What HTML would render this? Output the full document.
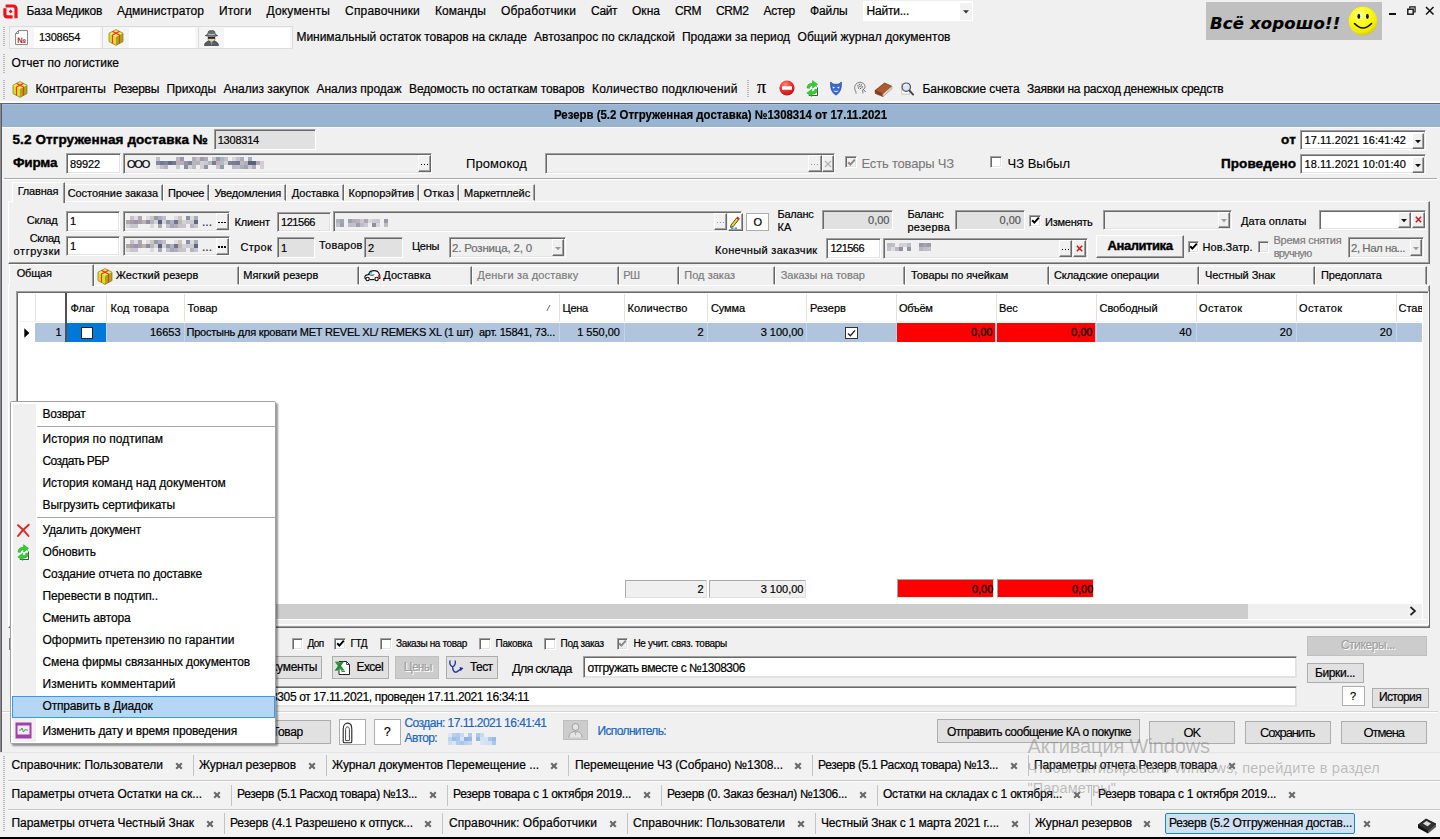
<!DOCTYPE html><html lang="ru"><head><meta charset="utf-8"><title>База Медиков</title><style>
*{box-sizing:border-box;margin:0;padding:0}
html,body{width:1440px;height:839px;overflow:hidden;background:#f0f0f0}
body{position:relative;font-family:"Liberation Sans",sans-serif;font-size:11px;color:#000;line-height:16px}
.t{position:absolute;white-space:nowrap;display:block;-webkit-text-stroke:0.2px}
.b{position:absolute;display:block}
svg{position:absolute;display:block;overflow:visible}
.sk{border:1px solid;border-color:#a0a0a0 #fff #fff #a0a0a0;box-shadow:inset 1px 1px 0 #696969,inset -1px -1px 0 #e3e3e3;background:#fff}
.skg{background:#e1e1e1}
.skf{background:#f0f0f0}
.btn{background:#e1e1e1;border:1px solid #adadad}
.btnw{background:#fff;border:1px solid #adadad}
.btnd{background:#ccc;border:1px solid #bfbfbf}
.cb{border:1px solid;border-color:#a0a0a0 #fff #fff #a0a0a0;box-shadow:inset 1px 1px 0 #696969,inset -1px -1px 0 #e3e3e3;background:#fff}
.cbd{background:#f0f0f0}
.sb{background:#f0f0f0;border:1px solid;border-color:#fff #696969 #696969 #fff;box-shadow:inset -1px -1px 0 #a0a0a0}
.tab{border:1px solid;border-color:#fff #696969 transparent #fff;box-shadow:inset -1px 0 0 #a0a0a0;background:#f0f0f0}
.grip{background-image:repeating-linear-gradient(to bottom,#b8b8b8 0,#b8b8b8 1px,transparent 1px,transparent 2px);}
</style></head><body>
<svg style="left:3px;top:3.5px" width="15" height="15" viewBox="0 0 15 15"><path d="M2.6 2H10Q13 2 13 5V14.2" fill="none" stroke="#f01018" stroke-width="3.2"/><path d="M1.9 4.2V10.5Q1.9 12.9 4.4 12.9H9.6" fill="none" stroke="#f01018" stroke-width="3.2"/><path d="M7.6 5.4L9.6 7.4L7.6 9.4L5.6 7.4Z" fill="#f01018"/></svg>
<span class="t" style="left:26.50px;top:2.92px;font-size:12px;letter-spacing:-0.259px">База Медиков</span>
<span class="t" style="left:117.00px;top:2.92px;font-size:12px;letter-spacing:0.032px">Администратор</span>
<span class="t" style="left:219.00px;top:2.92px;font-size:12px;letter-spacing:0.152px">Итоги</span>
<span class="t" style="left:266.50px;top:2.92px;font-size:12px;letter-spacing:0.183px">Документы</span>
<span class="t" style="left:345.00px;top:2.92px;font-size:12px;letter-spacing:0.209px">Справочники</span>
<span class="t" style="left:435.00px;top:2.92px;font-size:12px;letter-spacing:0.023px">Команды</span>
<span class="t" style="left:501.00px;top:2.92px;font-size:12px;letter-spacing:0.160px">Обработчики</span>
<span class="t" style="left:591.00px;top:2.92px;font-size:12px;letter-spacing:-0.418px">Сайт</span>
<span class="t" style="left:632.00px;top:2.92px;font-size:12px;letter-spacing:0.029px">Окна</span>
<span class="t" style="left:675.00px;top:2.92px;font-size:12px;letter-spacing:-0.443px">CRM</span>
<span class="t" style="left:716.00px;top:2.92px;font-size:12px;letter-spacing:-0.375px">CRM2</span>
<span class="t" style="left:763.50px;top:2.92px;font-size:12px;letter-spacing:-0.243px">Астер</span>
<span class="t" style="left:810.00px;top:2.92px;font-size:12px;letter-spacing:-0.125px">Файлы</span>
<div class="b" style="left:863px;top:1px;width:109.5px;height:20px;background:#fff"></div>
<div class="b" style="left:959.5px;top:2.5px;width:12px;height:17.3px;background:#f2f2f2"></div>
<span class="t" style="left:866.50px;top:2.92px;font-size:12px;letter-spacing:-0.218px">Найти...</span>
<svg style="left:962.5px;top:9.5px" width="6" height="4"><path d="M0 0.3H6L3 3.6Z" fill="#333"/></svg>
<div class="b" style="left:1206px;top:2.3px;width:176px;height:37.7px;background:#c0c0c0"></div>
<span class="t" style="left:1210.00px;top:12.84px;font-size:16.5px;line-height:22px;letter-spacing:0.181px;font-weight:bold;font-style:italic;font-family:'DejaVu Sans','Liberation Sans',sans-serif">Всё хорошо!!</span>
<svg style="left:1348px;top:6px" width="30" height="30" viewBox="0 0 30 30"><defs><radialGradient id="sm" cx="0.4" cy="0.3" r="0.75"><stop offset="0" stop-color="#ffffb0"/><stop offset="0.35" stop-color="#ffff20"/><stop offset="0.8" stop-color="#f0e800"/><stop offset="1" stop-color="#c8c000"/></radialGradient></defs><circle cx="15" cy="15" r="14.3" fill="url(#sm)"/><ellipse cx="10.8" cy="10.3" rx="1.4" ry="2.6" fill="#111"/><ellipse cx="19.4" cy="10.3" rx="1.4" ry="2.6" fill="#111"/><path d="M6.5 17.5 Q15 26.5 23.5 17.5" fill="none" stroke="#111" stroke-width="1.6" stroke-linecap="round"/></svg>
<div class="b" style="left:1389px;top:12.5px;width:7px;height:2px;background:#111"></div>
<svg style="left:1406.5px;top:6px" width="9" height="9"><path d="M2.8 2.6V0.8H8.1V6H6.4" fill="none" stroke="#111" stroke-width="1.2"/><rect x="0.8" y="3.2" width="5.4" height="5" fill="none" stroke="#111" stroke-width="1.4"/></svg>
<svg style="left:1425px;top:6px" width="10" height="10"><path d="M1 1L8.5 8.5M8.5 1L1 8.5" stroke="#111" stroke-width="1.5"/></svg>
<div class="b grip" style="left:3px;top:27px;width:2px;height:20px;"></div>
<div class="b grip" style="left:3px;top:54px;width:2px;height:20px;"></div>
<div class="b grip" style="left:3px;top:80px;width:2px;height:19px;"></div>
<div class="b" style="left:8.5px;top:26px;width:284.5px;height:22.5px;background:#f5f5f5;border:1px solid #dcdcdc"></div>
<div class="b" style="left:102px;top:27px;width:1px;height:20.5px;background:#dcdcdc"></div>
<div class="b" style="left:198px;top:27px;width:1px;height:20.5px;background:#dcdcdc"></div>
<div class="b" style="left:33.5px;top:27.5px;width:66px;height:20px;background:#fff"></div>
<div class="b" style="left:129px;top:27.5px;width:66px;height:20px;background:#fff"></div>
<div class="b" style="left:224px;top:27.5px;width:65.5px;height:20px;background:#fff"></div>
<span class="t" style="left:39.00px;top:29.06px;letter-spacing:-0.260px">1308654</span>
<svg style="left:14px;top:29px" width="16" height="17" viewBox="0 0 16 17"><path d="M1.5 4.5H4.5V1.5H13.5V15.5H1.5Z" fill="#fff" stroke="#8a8a8a" stroke-width="1"/><path d="M1.5 4.5L4.5 1.5" stroke="#8a8a8a"/><text x="3" y="13.5" font-size="8" font-weight="bold" fill="#b01818" font-family="Liberation Sans,sans-serif">№</text></svg>
<svg style="left:108px;top:28.5px" width="16" height="17" viewBox="0 0 16 17"><path d="M8 0.6L15 4.2L8 7.8L1 4.2Z" fill="#f0f050"/><path d="M1 4.2L8 7.8V16.4L1 12.6Z" fill="#dede28"/><path d="M8 7.8L15 4.2V12.6L8 16.4Z" fill="#a8a818"/><path d="M8 0.6L15 4.2V12.6L8 16.4L1 12.6V4.2Z" fill="none" stroke="#7a7a20" stroke-width="0.7"/><path d="M4.5 2.4L11.5 6V14.4M11.5 2.4L4.5 6V14.4" fill="none" stroke="#f03434" stroke-width="1.2"/></svg>
<svg style="left:203px;top:29px" width="17" height="17" viewBox="0 0 17 17"><path d="M2.2 6.6C4 5.8 5 5.4 5.3 2.6C5.5 1.2 11.5 1.2 11.7 2.6C12 5.4 13 5.8 14.8 6.6C12 7.8 5 7.8 2.2 6.6Z" fill="#6c6c6c" stroke="#333" stroke-width="0.6"/><path d="M5.2 4.6C7 5.4 10 5.4 11.8 4.6L12 5.6C10 6.4 7 6.4 5 5.6Z" fill="#a8d0f0"/><path d="M5 7.5H12V10.5C12 12 10.2 13 8.5 13C6.8 13 5 12 5 10.5Z" fill="#e6cfb0" stroke="#6b5a40" stroke-width="0.5"/><rect x="5" y="8" width="7" height="1.8" fill="#222"/><path d="M1.5 16.5C1.5 13.5 4.5 12.2 6 12L8.5 14L11 12C12.5 12.2 15.5 13.5 15.5 16.5Z" fill="#5c5c5c" stroke="#222" stroke-width="0.6"/><path d="M7.3 13.2L8.5 16.5L9.7 13.2Z" fill="#58a0e0"/></svg>
<span class="t" style="left:296.50px;top:29.02px;font-size:12px;letter-spacing:-0.039px">Минимальный остаток товаров на складе</span>
<span class="t" style="left:534.00px;top:29.02px;font-size:12px;letter-spacing:0.013px">Автозапрос по складской</span>
<span class="t" style="left:682.00px;top:29.02px;font-size:12px;letter-spacing:-0.054px">Продажи за период</span>
<span class="t" style="left:797.50px;top:29.02px;font-size:12px;letter-spacing:0.042px">Общий журнал документов</span>
<span class="t" style="left:11.50px;top:55.22px;font-size:12px;letter-spacing:-0.019px">Отчет по логистике</span>
<svg style="left:12px;top:80.5px" width="16" height="17" viewBox="0 0 16 17"><path d="M8 0.6L15 4.2L8 7.8L1 4.2Z" fill="#f0f050"/><path d="M1 4.2L8 7.8V16.4L1 12.6Z" fill="#dede28"/><path d="M8 7.8L15 4.2V12.6L8 16.4Z" fill="#a8a818"/><path d="M8 0.6L15 4.2V12.6L8 16.4L1 12.6V4.2Z" fill="none" stroke="#7a7a20" stroke-width="0.7"/><path d="M4.5 2.4L11.5 6V14.4M11.5 2.4L4.5 6V14.4" fill="none" stroke="#f03434" stroke-width="1.2"/></svg>
<span class="t" style="left:35.40px;top:80.52px;font-size:12px;letter-spacing:-0.025px">Контрагенты</span>
<span class="t" style="left:113.50px;top:80.52px;font-size:12px;letter-spacing:-0.300px">Резервы</span>
<span class="t" style="left:166.50px;top:80.52px;font-size:12px;letter-spacing:-0.058px">Приходы</span>
<span class="t" style="left:223.50px;top:80.52px;font-size:12px;letter-spacing:-0.023px">Анализ закупок</span>
<span class="t" style="left:316.50px;top:80.52px;font-size:12px;letter-spacing:-0.010px">Анализ продаж</span>
<span class="t" style="left:409.00px;top:80.52px;font-size:12px;letter-spacing:-0.120px">Ведомость по остаткам товаров</span>
<span class="t" style="left:592.00px;top:80.52px;font-size:12px;letter-spacing:0.170px">Количество подключений</span>
<span class="t" style="left:922.50px;top:80.52px;font-size:12px;letter-spacing:-0.054px">Банковские счета</span>
<span class="t" style="left:1027.00px;top:80.52px;font-size:12px;letter-spacing:-0.230px">Заявки на расход денежных средств</span>
<div class="b grip" style="left:746.5px;top:80px;width:2px;height:18px;"></div>
<span class="t" style="left:757px;top:77px;font-size:18px;line-height:20px;font-family:'Liberation Serif','DejaVu Serif',serif">π</span>
<svg style="left:779px;top:80px" width="16" height="16" viewBox="0 0 16 16"><defs><radialGradient id="rs" cx="0.4" cy="0.3" r="0.8"><stop offset="0" stop-color="#ff8a80"/><stop offset="0.5" stop-color="#e83030"/><stop offset="1" stop-color="#b01010"/></radialGradient></defs><circle cx="8" cy="8" r="7.6" fill="url(#rs)"/><rect x="3" y="6.2" width="10" height="3.6" rx="0.6" fill="#fff"/></svg>
<svg style="left:806px;top:79.5px" width="13" height="17" viewBox="0 0 13 17"><path d="M2.5 4.5H8.5L11.5 7.5V15.5H2.5" fill="#fff" stroke="#8a8a8a" stroke-width="0.8"/><path d="M11.5 7.8V15.5H3" fill="none" stroke="#444" stroke-width="0.9"/><path d="M1 8C1 4.6 3.8 3 6.6 3.2V0.6L11.6 4.4L6.6 8.2V5.8C5 5.6 3.6 6.4 3.4 8.4Z" fill="#30d030" stroke="#18a018" stroke-width="0.5"/><path d="M11.4 9.4C11.4 12.8 8.6 14.4 5.8 14.2V16.6L0.8 12.9L5.8 9.2V11.6C7.4 11.8 8.8 11 9 9Z" fill="#30d030" stroke="#18a018" stroke-width="0.5"/></svg>
<svg style="left:829.5px;top:80.5px" width="12" height="15" viewBox="0 0 14 17"><path d="M0.8 0.8C2.5 3.5 4.5 3.6 7 3.6C9.5 3.6 11.5 3.5 13.2 0.8C13.8 6 12.8 13 7 16.2C1.2 13 0.2 6 0.8 0.8Z" fill="#3a6cd0" stroke="#1c3c90" stroke-width="0.8"/><path d="M3 6.3L6 7.6L3.4 8.4ZM11 6.3L8 7.6L10.6 8.4Z" fill="#fff"/><path d="M4.3 11.3Q7 13.6 9.7 11.3Q7 12.3 4.3 11.3Z" fill="#fff" stroke="#d8e4ff" stroke-width="0.5"/></svg>
<svg style="left:853px;top:80.5px" width="14" height="14" viewBox="0 0 16 17"><path d="M3.2 15.5C3.6 13 2 12 1.6 9.6C1 5 4 1.6 8 1.6C12 1.6 14.6 4.6 14 7.6C13.6 9.6 12 10.4 11.2 11L11.6 15" fill="#eee" stroke="#555" stroke-width="0.9"/><circle cx="8" cy="6.6" r="2.6" fill="none" stroke="#555" stroke-width="1.3" stroke-dasharray="1.4 1"/><circle cx="8" cy="6.6" r="1" fill="#777"/><path d="M11.5 9.5L15 13.5" stroke="#555" stroke-width="1"/></svg>
<svg style="left:874px;top:81px" width="19" height="16" viewBox="0 0 19 16"><path d="M1 9.5L10.5 2L17.8 5.2L8.6 13.2Z" fill="#b05830" stroke="#6a2e14" stroke-width="0.7"/><path d="M1 9.5L1.4 12.6L9 15.6L8.6 13.2Z" fill="#8a3c1c" stroke="#6a2e14" stroke-width="0.6"/><path d="M8.6 13.2L17.8 5.2L18 7.8L9 15.6Z" fill="#f4ead8" stroke="#8a7a60" stroke-width="0.6"/><path d="M9 14.2L17.9 6.4" stroke="#b8a888" stroke-width="0.5"/></svg>
<svg style="left:900px;top:80.5px" width="14" height="15" viewBox="0 0 16 17"><path d="M2 3H11V15H2Z" fill="#fff" stroke="#aaa" stroke-width="0.7"/><circle cx="7.2" cy="7" r="4.8" fill="#cfe0f4" fill-opacity="0.85" stroke="#555" stroke-width="1.4"/><path d="M10.6 10.6L15 15.4" stroke="#444" stroke-width="2.2" stroke-linecap="round"/><path d="M4.6 5.6A3 3 0 0 1 8 4" fill="none" stroke="#fff" stroke-width="1"/></svg>
<div class="b" style="left:0px;top:101px;width:1440px;height:1.5px;background:#fcfcfc"></div>
<div class="b" style="left:0px;top:102.5px;width:1440px;height:1.5px;background:#666"></div>
<div class="b" style="left:0px;top:104px;width:1.2px;height:648px;background:#868a90"></div>
<div class="b" style="left:1.2px;top:104px;width:1px;height:648px;background:#5e5e5e"></div>
<div class="b" style="left:2.2px;top:104px;width:1437.8px;height:22.5px;background:#99b4d1"></div>
<div class="b" style="left:2.2px;top:104px;width:1437.8px;height:1px;background:#a3c0e2"></div>
<div class="b" style="left:2.2px;top:126.5px;width:1437.8px;height:1px;background:#fafafa"></div>
<span class="t" style="left:553.5px;top:107.3px;font-size:12.5px;font-weight:bold;transform-origin:0 50%;transform:scaleX(0.9131)">Резерв (5.2 Отгруженная доставка) №1308314 от 17.11.2021</span>
<span class="t" style="left:12.50px;top:130.96px;font-size:13.5px;line-height:18px;letter-spacing:0.098px;font-weight:bold;-webkit-text-stroke:0.4px">5.2 Отгруженная доставка №</span>
<div class="b sk skg" style="left:213.5px;top:129px;width:102.5px;height:21px;"></div>
<span class="t" style="left:217.70px;top:131.56px;letter-spacing:-0.217px">1308314</span>
<span class="t" style="left:1281.00px;top:130.96px;font-size:13.5px;line-height:18px;letter-spacing:0.239px;font-weight:bold;-webkit-text-stroke:0.4px">от</span>
<div class="b sk" style="left:1300px;top:130px;width:126px;height:20px;"></div>
<span class="t" style="left:1304.50px;top:131.56px;letter-spacing:0.073px">17.11.2021 16:41:42</span>
<div class="b sb" style="left:1412px;top:132.5px;width:12px;height:16px;"></div>
<svg style="left:1415px;top:139.5px" width="6" height="4"><path d="M0 0H6L3 3.2Z" fill="#111"/></svg>
<span class="t" style="left:13.00px;top:154.46px;font-size:13.5px;line-height:18px;letter-spacing:-0.181px;font-weight:bold;-webkit-text-stroke:0.4px">Фирма</span>
<div class="b sk" style="left:66px;top:153px;width:54.5px;height:20.5px;"></div>
<span class="t" style="left:70.00px;top:155.56px;letter-spacing:-0.117px">89922</span>
<div class="b sk skf" style="left:123px;top:153px;width:309px;height:20.5px;"></div>
<span class="t" style="left:127.00px;top:155.56px;letter-spacing:-1.200px">ООО</span>
<svg style="left:156px;top:157px;filter:blur(0.5px)" width="110" height="12"><rect x="0" y="0" width="4" height="4" fill="#a5a5b4" fill-opacity="0.66"/><rect x="0" y="4" width="4" height="4" fill="#4e5878" fill-opacity="0.67"/><rect x="0" y="8" width="4" height="4" fill="#c9c4cc" fill-opacity="0.46"/><rect x="4" y="4" width="4" height="4" fill="#4e5878" fill-opacity="0.79"/><rect x="4" y="8" width="4" height="4" fill="#8d8294" fill-opacity="0.45"/><rect x="8" y="4" width="4" height="4" fill="#6b6f86" fill-opacity="0.85"/><rect x="8" y="8" width="4" height="4" fill="#4e5878" fill-opacity="0.40"/><rect x="12" y="4" width="4" height="4" fill="#4e5878" fill-opacity="0.87"/><rect x="16" y="4" width="4" height="4" fill="#4e5878" fill-opacity="0.78"/><rect x="20" y="0" width="4" height="4" fill="#8d8294" fill-opacity="0.53"/><rect x="20" y="4" width="4" height="4" fill="#b59aa0" fill-opacity="0.78"/><rect x="20" y="8" width="4" height="4" fill="#a5a5b4" fill-opacity="0.51"/><rect x="24" y="0" width="4" height="4" fill="#4e5878" fill-opacity="0.56"/><rect x="24" y="4" width="4" height="4" fill="#a5a5b4" fill-opacity="0.85"/><rect x="28" y="4" width="4" height="4" fill="#8d8294" fill-opacity="0.86"/><rect x="28" y="8" width="4" height="4" fill="#4e5878" fill-opacity="0.65"/><rect x="32" y="4" width="4" height="4" fill="#4e5878" fill-opacity="0.73"/><rect x="32" y="8" width="4" height="4" fill="#c9c4cc" fill-opacity="0.64"/><rect x="36" y="0" width="4" height="4" fill="#6b6f86" fill-opacity="0.51"/><rect x="36" y="4" width="4" height="4" fill="#a5a5b4" fill-opacity="0.78"/><rect x="36" y="8" width="4" height="4" fill="#6b6f86" fill-opacity="0.40"/><rect x="40" y="0" width="4" height="4" fill="#b59aa0" fill-opacity="0.56"/><rect x="40" y="4" width="4" height="4" fill="#a5a5b4" fill-opacity="0.80"/><rect x="44" y="0" width="4" height="4" fill="#4e5878" fill-opacity="0.54"/><rect x="44" y="4" width="4" height="4" fill="#c9c4cc" fill-opacity="0.74"/><rect x="44" y="8" width="4" height="4" fill="#b59aa0" fill-opacity="0.40"/><rect x="48" y="0" width="4" height="4" fill="#8d8294" fill-opacity="0.65"/><rect x="48" y="4" width="4" height="4" fill="#c9c4cc" fill-opacity="0.91"/><rect x="48" y="8" width="4" height="4" fill="#4e5878" fill-opacity="0.59"/><rect x="52" y="4" width="4" height="4" fill="#a5a5b4" fill-opacity="0.78"/><rect x="56" y="0" width="4" height="4" fill="#a5a5b4" fill-opacity="0.54"/><rect x="56" y="4" width="4" height="4" fill="#6b6f86" fill-opacity="0.89"/><rect x="60" y="0" width="4" height="4" fill="#4e5878" fill-opacity="0.57"/><rect x="60" y="4" width="4" height="4" fill="#b59aa0" fill-opacity="0.75"/><rect x="60" y="8" width="4" height="4" fill="#a5a5b4" fill-opacity="0.57"/><rect x="64" y="0" width="4" height="4" fill="#4e5878" fill-opacity="0.40"/><rect x="64" y="4" width="4" height="4" fill="#a5a5b4" fill-opacity="0.73"/><rect x="64" y="8" width="4" height="4" fill="#4e5878" fill-opacity="0.56"/><rect x="68" y="0" width="4" height="4" fill="#a5a5b4" fill-opacity="0.64"/><rect x="68" y="4" width="4" height="4" fill="#c9c4cc" fill-opacity="0.68"/><rect x="72" y="4" width="4" height="4" fill="#4e5878" fill-opacity="0.72"/><rect x="76" y="0" width="4" height="4" fill="#c9c4cc" fill-opacity="0.58"/><rect x="76" y="4" width="4" height="4" fill="#4e5878" fill-opacity="0.75"/><rect x="76" y="8" width="4" height="4" fill="#8d8294" fill-opacity="0.51"/><rect x="80" y="0" width="4" height="4" fill="#a5a5b4" fill-opacity="0.61"/><rect x="80" y="4" width="4" height="4" fill="#4e5878" fill-opacity="0.79"/><rect x="80" y="8" width="4" height="4" fill="#6b6f86" fill-opacity="0.39"/><rect x="84" y="0" width="4" height="4" fill="#4e5878" fill-opacity="0.44"/><rect x="84" y="4" width="4" height="4" fill="#b59aa0" fill-opacity="0.68"/><rect x="84" y="8" width="4" height="4" fill="#4e5878" fill-opacity="0.42"/><rect x="88" y="4" width="4" height="4" fill="#a5a5b4" fill-opacity="0.84"/><rect x="88" y="8" width="4" height="4" fill="#4e5878" fill-opacity="0.51"/><rect x="92" y="0" width="4" height="4" fill="#6b6f86" fill-opacity="0.53"/><rect x="92" y="4" width="4" height="4" fill="#4e5878" fill-opacity="0.95"/><rect x="92" y="8" width="4" height="4" fill="#b59aa0" fill-opacity="0.45"/><rect x="96" y="4" width="4" height="4" fill="#4e5878" fill-opacity="0.94"/><rect x="96" y="8" width="4" height="4" fill="#8d8294" fill-opacity="0.64"/><rect x="100" y="4" width="4" height="4" fill="#8d8294" fill-opacity="0.66"/><rect x="104" y="4" width="4" height="4" fill="#c9c4cc" fill-opacity="0.82"/><rect x="104" y="8" width="4" height="4" fill="#b59aa0" fill-opacity="0.42"/></svg>
<div class="b sb" style="left:418px;top:155px;width:13px;height:17px;"></div>
<div class="b" style="left:420.6px;top:163.7px;width:1.5px;height:1.5px;background:#000"></div>
<div class="b" style="left:423.6px;top:163.7px;width:1.5px;height:1.5px;background:#000"></div>
<div class="b" style="left:426.6px;top:163.7px;width:1.5px;height:1.5px;background:#000"></div>
<span class="t" style="left:466.00px;top:154.98px;font-size:13px;line-height:18px;letter-spacing:0.083px;-webkit-text-stroke:0.08px">Промокод</span>
<div class="b sk skf" style="left:544.5px;top:153px;width:290.5px;height:20.5px;"></div>
<div class="b sb" style="left:808px;top:155px;width:13.5px;height:17px;"></div>
<div class="b" style="left:810.85px;top:163.7px;width:1.5px;height:1.5px;background:#9a9a9a"></div>
<div class="b" style="left:813.85px;top:163.7px;width:1.5px;height:1.5px;background:#9a9a9a"></div>
<div class="b" style="left:816.85px;top:163.7px;width:1.5px;height:1.5px;background:#9a9a9a"></div>
<div class="b sb" style="left:821.5px;top:155px;width:12.5px;height:17px;"></div>
<svg style="left:824px;top:160px" width="8" height="8"><path d="M1 1L7 7M7 1L1 7" stroke="#b4b4b4" stroke-width="1.3"/></svg>
<div class="b cb cbd" style="left:845px;top:156.3px;width:11.5px;height:11.5px;"></div>
<svg style="left:846.5px;top:157.6px" width="9" height="9"><path d="M1.2 4.2L3.4 6.6L7.8 1.6" fill="none" stroke="#8a8a8a" stroke-width="2"/></svg>
<span class="t" style="left:861.50px;top:155.48px;font-size:13px;line-height:18px;letter-spacing:-0.185px;-webkit-text-stroke:0.08px;color:#787878">Есть товары ЧЗ</span>
<div class="b cb" style="left:990px;top:156.3px;width:11.5px;height:11.5px;"></div>
<span class="t" style="left:1007.50px;top:155.48px;font-size:13px;line-height:18px;-webkit-text-stroke:0.08px">ЧЗ Выбыл</span>
<span class="t" style="left:1221.00px;top:154.96px;font-size:13.5px;line-height:18px;letter-spacing:0.077px;font-weight:bold;-webkit-text-stroke:0.4px">Проведено</span>
<div class="b sk" style="left:1300px;top:154px;width:126px;height:20px;"></div>
<span class="t" style="left:1304.50px;top:155.56px;letter-spacing:0.073px">18.11.2021 10:01:40</span>
<div class="b sb" style="left:1412px;top:156.5px;width:12px;height:16px;"></div>
<svg style="left:1415px;top:163.5px" width="6" height="4"><path d="M0 0H6L3 3.2Z" fill="#111"/></svg>
<div class="b" style="left:3.5px;top:177.5px;width:1433.5px;height:1px;background:#a8a8a8"></div>
<div class="b" style="left:2px;top:178.5px;width:1435px;height:1px;background:#fff"></div>
<div class="b" style="left:8px;top:201px;width:1422.3px;height:63.3px;border:1px solid;border-color:#fff #696969 #696969 #fff;box-shadow:inset -1px -1px 0 #a0a0a0"></div>
<div class="b tab" style="left:64px;top:184px;width:98.5px;height:17px;"></div>
<span class="t" style="left:67.70px;top:184.56px;letter-spacing:-0.063px">Состояние заказа</span>
<div class="b tab" style="left:162.5px;top:184px;width:46px;height:17px;"></div>
<span class="t" style="left:168.00px;top:184.56px;letter-spacing:-0.277px">Прочее</span>
<div class="b tab" style="left:208.5px;top:184px;width:77px;height:17px;"></div>
<span class="t" style="left:214.40px;top:184.56px;letter-spacing:-0.198px">Уведомления</span>
<div class="b tab" style="left:285.5px;top:184px;width:58px;height:17px;"></div>
<span class="t" style="left:291.70px;top:184.56px;letter-spacing:0.008px">Доставка</span>
<div class="b tab" style="left:343.5px;top:184px;width:75px;height:17px;"></div>
<span class="t" style="left:348.60px;top:184.56px;letter-spacing:-0.020px">Корпорэйтив</span>
<div class="b tab" style="left:418.5px;top:184px;width:40px;height:17px;"></div>
<span class="t" style="left:423.60px;top:184.56px;letter-spacing:0.182px">Отказ</span>
<div class="b tab" style="left:458.5px;top:184px;width:76px;height:17px;"></div>
<span class="t" style="left:464.00px;top:184.56px;letter-spacing:-0.126px">Маркетплейс</span>
<div class="b tab" style="left:12px;top:182px;width:53px;height:21px;border-bottom:none"></div>
<span class="t" style="left:17.70px;top:182.56px;letter-spacing:-0.181px">Главная</span>
<span class="t" style="left:26.70px;top:212.36px;letter-spacing:-0.206px">Склад</span>
<div class="b sk" style="left:65.5px;top:211px;width:54.5px;height:20.5px;"></div>
<span class="t" style="left:70.00px;top:213.06px">1</span>
<div class="b sk skf" style="left:122.5px;top:211px;width:107.5px;height:20.5px;"></div>
<svg style="left:126px;top:215.5px;filter:blur(0.5px)" width="74" height="13"><rect x="0" y="4" width="4" height="4" fill="#a89a90" fill-opacity="0.85"/><rect x="0" y="8" width="4" height="4" fill="#c9c4cc" fill-opacity="0.62"/><rect x="4" y="0" width="4" height="4" fill="#8d8294" fill-opacity="0.42"/><rect x="4" y="4" width="4" height="4" fill="#8d8294" fill-opacity="0.76"/><rect x="4" y="8" width="4" height="4" fill="#8d8294" fill-opacity="0.39"/><rect x="8" y="0" width="4" height="4" fill="#c9c4cc" fill-opacity="0.43"/><rect x="8" y="4" width="4" height="4" fill="#8d8294" fill-opacity="0.84"/><rect x="8" y="8" width="4" height="4" fill="#8d8294" fill-opacity="0.38"/><rect x="12" y="0" width="4" height="4" fill="#8d8294" fill-opacity="0.67"/><rect x="12" y="4" width="4" height="4" fill="#8d8294" fill-opacity="0.74"/><rect x="16" y="4" width="4" height="4" fill="#a89a90" fill-opacity="0.71"/><rect x="20" y="0" width="4" height="4" fill="#c9c4cc" fill-opacity="0.43"/><rect x="20" y="4" width="4" height="4" fill="#6b6f86" fill-opacity="0.75"/><rect x="24" y="0" width="4" height="4" fill="#a89a90" fill-opacity="0.48"/><rect x="24" y="4" width="4" height="4" fill="#a5a5b4" fill-opacity="0.79"/><rect x="24" y="8" width="4" height="4" fill="#c9c4cc" fill-opacity="0.53"/><rect x="28" y="0" width="4" height="4" fill="#6b6f86" fill-opacity="0.67"/><rect x="28" y="4" width="4" height="4" fill="#c9c4cc" fill-opacity="0.66"/><rect x="32" y="0" width="4" height="4" fill="#6b6f86" fill-opacity="0.52"/><rect x="32" y="4" width="4" height="4" fill="#4e5878" fill-opacity="0.94"/><rect x="32" y="8" width="4" height="4" fill="#8d8294" fill-opacity="0.66"/><rect x="36" y="0" width="4" height="4" fill="#a5a5b4" fill-opacity="0.65"/><rect x="36" y="4" width="4" height="4" fill="#c9c4cc" fill-opacity="0.68"/><rect x="40" y="4" width="4" height="4" fill="#6b6f86" fill-opacity="0.71"/><rect x="40" y="8" width="4" height="4" fill="#a5a5b4" fill-opacity="0.66"/><rect x="44" y="4" width="4" height="4" fill="#a5a5b4" fill-opacity="0.86"/><rect x="44" y="8" width="4" height="4" fill="#6b6f86" fill-opacity="0.57"/><rect x="48" y="0" width="4" height="4" fill="#c9c4cc" fill-opacity="0.43"/><rect x="48" y="4" width="4" height="4" fill="#4e5878" fill-opacity="0.81"/><rect x="48" y="8" width="4" height="4" fill="#8d8294" fill-opacity="0.61"/><rect x="52" y="0" width="4" height="4" fill="#a89a90" fill-opacity="0.51"/><rect x="52" y="4" width="4" height="4" fill="#a89a90" fill-opacity="0.66"/><rect x="52" y="8" width="4" height="4" fill="#8d8294" fill-opacity="0.42"/><rect x="56" y="4" width="4" height="4" fill="#c9c4cc" fill-opacity="0.68"/><rect x="56" y="8" width="4" height="4" fill="#8d8294" fill-opacity="0.40"/><rect x="60" y="0" width="4" height="4" fill="#4e5878" fill-opacity="0.64"/><rect x="60" y="4" width="4" height="4" fill="#c9c4cc" fill-opacity="0.94"/><rect x="64" y="0" width="4" height="4" fill="#c9c4cc" fill-opacity="0.50"/><rect x="64" y="4" width="4" height="4" fill="#c9c4cc" fill-opacity="0.90"/><rect x="64" y="8" width="4" height="4" fill="#8d8294" fill-opacity="0.57"/><rect x="68" y="0" width="4" height="4" fill="#6b6f86" fill-opacity="0.53"/><rect x="68" y="4" width="4" height="4" fill="#4e5878" fill-opacity="0.91"/><rect x="68" y="8" width="4" height="4" fill="#a5a5b4" fill-opacity="0.59"/></svg>
<span class="t" style="left:202.00px;top:213.52px;font-size:12px;color:#334">...</span>
<div class="b sb" style="left:215.5px;top:213px;width:13px;height:17px;"></div>
<div class="b" style="left:218.1px;top:221.7px;width:1.5px;height:1.5px;background:#000"></div>
<div class="b" style="left:221.1px;top:221.7px;width:1.5px;height:1.5px;background:#000"></div>
<div class="b" style="left:224.1px;top:221.7px;width:1.5px;height:1.5px;background:#000"></div>
<span class="t" style="left:234.50px;top:213.86px;letter-spacing:-0.117px">Клиент</span>
<div class="b sk skf" style="left:276.5px;top:211.5px;width:54.5px;height:20px;"></div>
<span class="t" style="left:281.00px;top:213.86px;letter-spacing:-0.451px">121566</span>
<div class="b sk skf" style="left:332.5px;top:211px;width:409.5px;height:20.5px;"></div>
<svg style="left:336px;top:218.5px;filter:blur(0.5px)" width="52" height="9.5"><rect x="0" y="0" width="4" height="4" fill="#6b6f86" fill-opacity="0.47"/><rect x="0" y="4" width="4" height="4" fill="#a5a5b4" fill-opacity="0.62"/><rect x="4" y="0" width="4" height="4" fill="#6b6f86" fill-opacity="0.58"/><rect x="4" y="4" width="4" height="4" fill="#6b6f86" fill-opacity="0.62"/><rect x="12" y="0" width="4" height="4" fill="#6b6f86" fill-opacity="0.62"/><rect x="12" y="4" width="4" height="4" fill="#8d8294" fill-opacity="0.46"/><rect x="16" y="0" width="4" height="4" fill="#8d8294" fill-opacity="0.61"/><rect x="16" y="4" width="4" height="4" fill="#b0a8b8" fill-opacity="0.69"/><rect x="20" y="0" width="4" height="4" fill="#8d8294" fill-opacity="0.56"/><rect x="20" y="4" width="4" height="4" fill="#6b6f86" fill-opacity="0.62"/><rect x="24" y="0" width="4" height="4" fill="#b0a8b8" fill-opacity="0.58"/><rect x="24" y="4" width="4" height="4" fill="#b0a8b8" fill-opacity="0.73"/><rect x="28" y="0" width="4" height="4" fill="#8d8294" fill-opacity="0.66"/><rect x="28" y="4" width="4" height="4" fill="#b0a8b8" fill-opacity="0.54"/><rect x="32" y="0" width="4" height="4" fill="#c9c4cc" fill-opacity="0.54"/><rect x="36" y="0" width="4" height="4" fill="#a5a5b4" fill-opacity="0.50"/><rect x="36" y="4" width="4" height="4" fill="#6b6f86" fill-opacity="0.74"/><rect x="40" y="0" width="4" height="4" fill="#a5a5b4" fill-opacity="0.55"/><rect x="40" y="4" width="4" height="4" fill="#c9c4cc" fill-opacity="0.62"/><rect x="48" y="0" width="4" height="4" fill="#6b6f86" fill-opacity="0.67"/><rect x="48" y="4" width="4" height="4" fill="#b0a8b8" fill-opacity="0.75"/></svg>
<div class="b sb" style="left:714px;top:213px;width:13px;height:17px;"></div>
<div class="b" style="left:716.6px;top:221.7px;width:1.5px;height:1.5px;background:#9a9a9a"></div>
<div class="b" style="left:719.6px;top:221.7px;width:1.5px;height:1.5px;background:#9a9a9a"></div>
<div class="b" style="left:722.6px;top:221.7px;width:1.5px;height:1.5px;background:#9a9a9a"></div>
<div class="b sb" style="left:727.5px;top:213px;width:15px;height:17.5px;background:#fff"></div>
<svg style="left:729px;top:215px" width="12" height="14"><path d="M2 10L8 2.5L10 4.2L4.2 11.5L1.6 12.4Z" fill="#f0e020" stroke="#222" stroke-width="0.8"/><path d="M7.2 3.4L8.6 1.6L10.8 3.4L9.4 5Z" fill="#e02020"/><path d="M2 13.2H9" stroke="#208890" stroke-width="1.3" stroke-dasharray="2.5 1"/></svg>
<div class="b btnw" style="left:746px;top:212.5px;width:22.5px;height:18.5px;"></div>
<span class="t" style="left:753.50px;top:213.56px">O</span>
<span class="t" style="left:777.50px;top:206.06px;letter-spacing:-0.241px">Баланс</span>
<span class="t" style="left:777.50px;top:219.06px">КА</span>
<div class="b sk skg" style="left:821.5px;top:209.5px;width:71.5px;height:20.5px;"></div>
<span class="t" style="left:868.09px;top:212.06px;color:#555">0,00</span>
<span class="t" style="left:907.50px;top:206.06px;letter-spacing:-0.241px">Баланс</span>
<span class="t" style="left:907.50px;top:219.06px;letter-spacing:0.217px">резерва</span>
<div class="b sk skg" style="left:955px;top:209.5px;width:69.5px;height:20.5px;"></div>
<span class="t" style="left:999.59px;top:212.06px;color:#555">0,00</span>
<div class="b cb" style="left:1029px;top:215px;width:11.5px;height:11.5px;"></div>
<svg style="left:1030.5px;top:216.3px" width="9" height="9"><path d="M1.2 4.2L3.4 6.6L7.8 1.6" fill="none" stroke="#000" stroke-width="2"/></svg>
<span class="t" style="left:1045.00px;top:213.56px;letter-spacing:-0.241px">Изменять</span>
<div class="b sk skf" style="left:1102.5px;top:210px;width:129px;height:20px;"></div>
<div class="b sb" style="left:1217.5px;top:212px;width:12px;height:16px;"></div>
<svg style="left:1220.5px;top:219px" width="6" height="4"><path d="M0 0H6L3 3.2Z" fill="#9a9a9a"/></svg>
<span class="t" style="left:1241.00px;top:213.06px;letter-spacing:0.070px">Дата оплаты</span>
<div class="b sk" style="left:1319px;top:210px;width:107px;height:19.5px;"></div>
<div class="b sb" style="left:1398px;top:212px;width:12.5px;height:15.5px;"></div>
<svg style="left:1401.25px;top:218.75px" width="6" height="4"><path d="M0 0H6L3 3.2Z" fill="#111"/></svg>
<div class="b sb" style="left:1411.5px;top:212px;width:13px;height:15.5px;"></div>
<svg style="left:1414.5px;top:215.75px" width="7" height="7"><path d="M0.8 0.8L6.2 6.2M6.2 0.8L0.8 6.2" stroke="#d01010" stroke-width="1.4"/></svg>
<span class="t" style="left:29.80px;top:230.06px;letter-spacing:-0.406px">Склад</span>
<span class="t" style="left:13.60px;top:242.56px;letter-spacing:0.560px">отгрузки</span>
<div class="b sk" style="left:65.5px;top:235.5px;width:54.5px;height:20.5px;"></div>
<span class="t" style="left:70.00px;top:238.06px">1</span>
<div class="b sk skf" style="left:122.5px;top:235.5px;width:107.5px;height:20.5px;"></div>
<svg style="left:126px;top:240px;filter:blur(0.5px)" width="74" height="13"><rect x="0" y="4" width="4" height="4" fill="#a89a90" fill-opacity="0.85"/><rect x="0" y="8" width="4" height="4" fill="#c9c4cc" fill-opacity="0.62"/><rect x="4" y="0" width="4" height="4" fill="#8d8294" fill-opacity="0.42"/><rect x="4" y="4" width="4" height="4" fill="#8d8294" fill-opacity="0.76"/><rect x="4" y="8" width="4" height="4" fill="#8d8294" fill-opacity="0.39"/><rect x="8" y="0" width="4" height="4" fill="#c9c4cc" fill-opacity="0.43"/><rect x="8" y="4" width="4" height="4" fill="#8d8294" fill-opacity="0.84"/><rect x="8" y="8" width="4" height="4" fill="#8d8294" fill-opacity="0.38"/><rect x="12" y="0" width="4" height="4" fill="#8d8294" fill-opacity="0.67"/><rect x="12" y="4" width="4" height="4" fill="#8d8294" fill-opacity="0.74"/><rect x="16" y="4" width="4" height="4" fill="#a89a90" fill-opacity="0.71"/><rect x="20" y="0" width="4" height="4" fill="#c9c4cc" fill-opacity="0.43"/><rect x="20" y="4" width="4" height="4" fill="#6b6f86" fill-opacity="0.75"/><rect x="24" y="0" width="4" height="4" fill="#a89a90" fill-opacity="0.48"/><rect x="24" y="4" width="4" height="4" fill="#a5a5b4" fill-opacity="0.79"/><rect x="24" y="8" width="4" height="4" fill="#c9c4cc" fill-opacity="0.53"/><rect x="28" y="0" width="4" height="4" fill="#6b6f86" fill-opacity="0.67"/><rect x="28" y="4" width="4" height="4" fill="#c9c4cc" fill-opacity="0.66"/><rect x="32" y="0" width="4" height="4" fill="#6b6f86" fill-opacity="0.52"/><rect x="32" y="4" width="4" height="4" fill="#4e5878" fill-opacity="0.94"/><rect x="32" y="8" width="4" height="4" fill="#8d8294" fill-opacity="0.66"/><rect x="36" y="0" width="4" height="4" fill="#a5a5b4" fill-opacity="0.65"/><rect x="36" y="4" width="4" height="4" fill="#c9c4cc" fill-opacity="0.68"/><rect x="40" y="4" width="4" height="4" fill="#6b6f86" fill-opacity="0.71"/><rect x="40" y="8" width="4" height="4" fill="#a5a5b4" fill-opacity="0.66"/><rect x="44" y="4" width="4" height="4" fill="#a5a5b4" fill-opacity="0.86"/><rect x="44" y="8" width="4" height="4" fill="#6b6f86" fill-opacity="0.57"/><rect x="48" y="0" width="4" height="4" fill="#c9c4cc" fill-opacity="0.43"/><rect x="48" y="4" width="4" height="4" fill="#4e5878" fill-opacity="0.81"/><rect x="48" y="8" width="4" height="4" fill="#8d8294" fill-opacity="0.61"/><rect x="52" y="0" width="4" height="4" fill="#a89a90" fill-opacity="0.51"/><rect x="52" y="4" width="4" height="4" fill="#a89a90" fill-opacity="0.66"/><rect x="52" y="8" width="4" height="4" fill="#8d8294" fill-opacity="0.42"/><rect x="56" y="4" width="4" height="4" fill="#c9c4cc" fill-opacity="0.68"/><rect x="56" y="8" width="4" height="4" fill="#8d8294" fill-opacity="0.40"/><rect x="60" y="0" width="4" height="4" fill="#4e5878" fill-opacity="0.64"/><rect x="60" y="4" width="4" height="4" fill="#c9c4cc" fill-opacity="0.94"/><rect x="64" y="0" width="4" height="4" fill="#c9c4cc" fill-opacity="0.50"/><rect x="64" y="4" width="4" height="4" fill="#c9c4cc" fill-opacity="0.90"/><rect x="64" y="8" width="4" height="4" fill="#8d8294" fill-opacity="0.57"/><rect x="68" y="0" width="4" height="4" fill="#6b6f86" fill-opacity="0.53"/><rect x="68" y="4" width="4" height="4" fill="#4e5878" fill-opacity="0.91"/><rect x="68" y="8" width="4" height="4" fill="#a5a5b4" fill-opacity="0.59"/></svg>
<span class="t" style="left:202.00px;top:238.52px;font-size:12px;color:#334">...</span>
<div class="b sb" style="left:215.5px;top:237.5px;width:13px;height:17px;"></div>
<div class="b" style="left:218.1px;top:246.2px;width:1.5px;height:1.5px;background:#000"></div>
<div class="b" style="left:221.1px;top:246.2px;width:1.5px;height:1.5px;background:#000"></div>
<div class="b" style="left:224.1px;top:246.2px;width:1.5px;height:1.5px;background:#000"></div>
<span class="t" style="left:240.50px;top:238.56px;letter-spacing:0.294px">Строк</span>
<div class="b sk skg" style="left:276.5px;top:237px;width:38.5px;height:21px;"></div>
<span class="t" style="left:281.00px;top:240.06px">1</span>
<span class="t" style="left:319.00px;top:237.06px;letter-spacing:0.258px">Товаров</span>
<div class="b sk skg" style="left:364px;top:237px;width:39px;height:21px;"></div>
<span class="t" style="left:368.00px;top:240.06px">2</span>
<span class="t" style="left:412.00px;top:238.06px;letter-spacing:-0.309px">Цены</span>
<div class="b sk skf" style="left:448.5px;top:237px;width:117.5px;height:21px;"></div>
<span class="t" style="left:452.00px;top:239.54px;font-size:11.5px;letter-spacing:-0.177px;color:#6d6d6d">2. Розница, 2, 0</span>
<div class="b sb" style="left:552px;top:239px;width:12px;height:17px;"></div>
<svg style="left:555px;top:246.5px" width="6" height="4"><path d="M0 0H6L3 3.2Z" fill="#9a9a9a"/></svg>
<span class="t" style="left:715.00px;top:241.56px;letter-spacing:0.333px">Конечный заказчик</span>
<div class="b sk" style="left:826px;top:238px;width:55px;height:20.5px;"></div>
<span class="t" style="left:830.50px;top:240.06px;letter-spacing:-0.534px">121566</span>
<div class="b sk skf" style="left:882.5px;top:238px;width:205px;height:20.5px;"></div>
<svg style="left:887px;top:243px;filter:blur(0.5px)" width="49" height="10"><rect x="0" y="0" width="4" height="4" fill="#8d8294" fill-opacity="0.51"/><rect x="0" y="4" width="4" height="4" fill="#a5a5b4" fill-opacity="0.60"/><rect x="4" y="0" width="4" height="4" fill="#b0a8b8" fill-opacity="0.73"/><rect x="4" y="4" width="4" height="4" fill="#c9c4cc" fill-opacity="0.50"/><rect x="8" y="4" width="4" height="4" fill="#8d8294" fill-opacity="0.52"/><rect x="12" y="0" width="4" height="4" fill="#b0a8b8" fill-opacity="0.47"/><rect x="12" y="4" width="4" height="4" fill="#6b6f86" fill-opacity="0.73"/><rect x="16" y="0" width="4" height="4" fill="#c9c4cc" fill-opacity="0.72"/><rect x="20" y="0" width="4" height="4" fill="#a5a5b4" fill-opacity="0.69"/><rect x="20" y="4" width="4" height="4" fill="#6b6f86" fill-opacity="0.71"/><rect x="32" y="0" width="4" height="4" fill="#6b6f86" fill-opacity="0.68"/><rect x="32" y="4" width="4" height="4" fill="#8d8294" fill-opacity="0.55"/><rect x="36" y="0" width="4" height="4" fill="#6b6f86" fill-opacity="0.60"/><rect x="36" y="4" width="4" height="4" fill="#b0a8b8" fill-opacity="0.73"/><rect x="40" y="0" width="4" height="4" fill="#6b6f86" fill-opacity="0.66"/><rect x="40" y="4" width="4" height="4" fill="#b0a8b8" fill-opacity="0.67"/></svg>
<div class="b sb" style="left:1059px;top:240px;width:13px;height:17px;"></div>
<div class="b" style="left:1061.6px;top:248.7px;width:1.5px;height:1.5px;background:#000"></div>
<div class="b" style="left:1064.6px;top:248.7px;width:1.5px;height:1.5px;background:#000"></div>
<div class="b" style="left:1067.6px;top:248.7px;width:1.5px;height:1.5px;background:#000"></div>
<div class="b sb" style="left:1073px;top:240px;width:13px;height:17px;"></div>
<svg style="left:1076px;top:244.5px" width="7" height="7"><path d="M0.8 0.8L6.2 6.2M6.2 0.8L0.8 6.2" stroke="#d01010" stroke-width="1.4"/></svg>
<div class="b sb" style="left:1096px;top:235px;width:87.5px;height:22.5px;"></div>
<span class="t" style="left:1107.50px;top:236.98px;font-size:13px;line-height:18px;letter-spacing:-0.424px;font-weight:bold;-webkit-text-stroke:0.4px">Аналитика</span>
<div class="b cb" style="left:1187.5px;top:241px;width:11.5px;height:11.5px;"></div>
<svg style="left:1189px;top:242.3px" width="9" height="9"><path d="M1.2 4.2L3.4 6.6L7.8 1.6" fill="none" stroke="#000" stroke-width="2"/></svg>
<span class="t" style="left:1202.50px;top:239.06px;letter-spacing:0.034px">Нов.Затр.</span>
<div class="b cb cbd" style="left:1257.5px;top:241px;width:11.5px;height:11.5px;"></div>
<span class="t" style="left:1273.50px;top:232.06px;letter-spacing:-0.235px;color:#7c7c7c">Время снятия</span>
<span class="t" style="left:1273.75px;top:245.06px;letter-spacing:-0.735px;color:#7c7c7c">вручную</span>
<div class="b sk skf" style="left:1347.5px;top:237px;width:76.5px;height:21px;"></div>
<span class="t" style="left:1351.00px;top:239.54px;font-size:11.5px;letter-spacing:-0.477px;color:#6d6d6d">2, Нал на...</span>
<div class="b sb" style="left:1410px;top:239px;width:12px;height:17px;"></div>
<svg style="left:1413px;top:246.5px" width="6" height="4"><path d="M0 0H6L3 3.2Z" fill="#9a9a9a"/></svg>
<div class="b" style="left:8px;top:284.5px;width:1422.3px;height:343.5px;border:1px solid;border-color:#fff #696969 #696969 #fff;box-shadow:inset -1px -1px 0 #a0a0a0"></div>
<div class="b tab" style="left:93.5px;top:265.5px;width:145px;height:19.5px;"></div>
<span class="t" style="left:115.70px;top:267.06px;letter-spacing:0.055px">Жесткий резерв</span>
<div class="b tab" style="left:238.5px;top:265.5px;width:120px;height:19.5px;"></div>
<span class="t" style="left:243.30px;top:267.06px;letter-spacing:0.055px">Мягкий резерв</span>
<div class="b tab" style="left:358.5px;top:265.5px;width:113px;height:19.5px;"></div>
<span class="t" style="left:383.30px;top:267.06px;letter-spacing:0.058px">Доставка</span>
<div class="b tab" style="left:471.5px;top:265.5px;width:147px;height:19.5px;"></div>
<span class="t" style="left:477.30px;top:267.06px;letter-spacing:0.158px;color:#7c7c7c">Деньги за доставку</span>
<div class="b tab" style="left:618.5px;top:265.5px;width:60.5px;height:19.5px;"></div>
<span class="t" style="left:623.30px;top:267.06px;letter-spacing:-0.610px;color:#7c7c7c">РШ</span>
<div class="b tab" style="left:679px;top:265.5px;width:96px;height:19.5px;"></div>
<span class="t" style="left:684.30px;top:267.06px;letter-spacing:0.021px;color:#7c7c7c">Под заказ</span>
<div class="b tab" style="left:775px;top:265.5px;width:130px;height:19.5px;"></div>
<span class="t" style="left:780.70px;top:267.06px;letter-spacing:0.016px;color:#7c7c7c">Заказы на товар</span>
<div class="b tab" style="left:905px;top:265.5px;width:143.5px;height:19.5px;"></div>
<span class="t" style="left:911.00px;top:267.06px;letter-spacing:-0.083px">Товары по ячейкам</span>
<div class="b tab" style="left:1048.5px;top:265.5px;width:150.5px;height:19.5px;"></div>
<span class="t" style="left:1054.00px;top:267.06px;letter-spacing:-0.082px">Складские операции</span>
<div class="b tab" style="left:1199px;top:265.5px;width:116px;height:19.5px;"></div>
<span class="t" style="left:1205.00px;top:267.06px;letter-spacing:-0.068px">Честный Знак</span>
<div class="b tab" style="left:1315px;top:265.5px;width:112px;height:19.5px;"></div>
<span class="t" style="left:1321.00px;top:267.06px;letter-spacing:-0.102px">Предоплата</span>
<div class="b tab" style="left:9px;top:263.5px;width:85px;height:22.5px;border-bottom:none"></div>
<span class="t" style="left:16.70px;top:265.06px;letter-spacing:-0.196px">Общая</span>
<svg style="left:96.5px;top:267.5px" width="16" height="17" viewBox="0 0 16 17"><path d="M8 0.6L15 4.2L8 7.8L1 4.2Z" fill="#f0f050"/><path d="M1 4.2L8 7.8V16.4L1 12.6Z" fill="#dede28"/><path d="M8 7.8L15 4.2V12.6L8 16.4Z" fill="#a8a818"/><path d="M8 0.6L15 4.2V12.6L8 16.4L1 12.6V4.2Z" fill="none" stroke="#7a7a20" stroke-width="0.7"/><path d="M4.5 2.4L11.5 6V14.4M11.5 2.4L4.5 6V14.4" fill="none" stroke="#f03434" stroke-width="1.2"/></svg>
<svg style="left:363.5px;top:269.5px" width="17" height="12" viewBox="0 0 17 12"><path d="M2.2 8.6H1.2C0.6 7.4 0.8 5.6 2.2 5.2L4.4 4.6L6.2 1.6C8.4 0.6 11.6 0.6 13.4 1.4C15.2 3 16 5.4 15.8 8.4H14.8" fill="#fff" stroke="#111" stroke-width="1.2" stroke-linejoin="round"/><path d="M5 4.4C7 5.6 9 5.4 10.2 4.6" fill="none" stroke="#111" stroke-width="0.9"/><path d="M6 2.2L8.4 1.8L8 3.6L5.4 3.8Z" fill="#10d0e0"/><rect x="14.2" y="5" width="2" height="2.6" fill="#f01010"/><circle cx="3.6" cy="9" r="1.7" fill="#fff" stroke="#111" stroke-width="1.1"/><circle cx="12.6" cy="9" r="1.7" fill="#fff" stroke="#111" stroke-width="1.1"/><path d="M5.8 9.6H10.4" stroke="#111" stroke-width="1.1"/></svg>
<div class="b" style="left:16px;top:291px;width:1412.5px;height:334.3px;background:#fff;border:1px solid;border-color:#a0a0a0 #fff #fff #a0a0a0;box-shadow:inset 1px 1px 0 #696969,inset -1px -1px 0 #e3e3e3"></div>
<div class="b" style="left:1422px;top:293px;width:5.5px;height:331.3px;background:#f0f0f0;border-left:1px solid #fff"></div>
<div class="b" style="left:19px;top:619px;width:1408px;height:5.3px;background:#f0f0f0;border-top:1px solid #fff"></div>
<div class="b" style="left:34.5px;top:294px;width:1px;height:27px;background:#e2e2e2"></div>
<div class="b" style="left:106px;top:294px;width:1px;height:27px;background:#e2e2e2"></div>
<div class="b" style="left:183.5px;top:294px;width:1px;height:27px;background:#e2e2e2"></div>
<div class="b" style="left:558.5px;top:294px;width:1px;height:27px;background:#e2e2e2"></div>
<div class="b" style="left:623.5px;top:294px;width:1px;height:27px;background:#e2e2e2"></div>
<div class="b" style="left:706.5px;top:294px;width:1px;height:27px;background:#e2e2e2"></div>
<div class="b" style="left:806px;top:294px;width:1px;height:27px;background:#e2e2e2"></div>
<div class="b" style="left:895.5px;top:294px;width:1px;height:27px;background:#e2e2e2"></div>
<div class="b" style="left:995.5px;top:294px;width:1px;height:27px;background:#e2e2e2"></div>
<div class="b" style="left:1095.5px;top:294px;width:1px;height:27px;background:#e2e2e2"></div>
<div class="b" style="left:1195.5px;top:294px;width:1px;height:27px;background:#e2e2e2"></div>
<div class="b" style="left:1295.5px;top:294px;width:1px;height:27px;background:#e2e2e2"></div>
<div class="b" style="left:1395.5px;top:294px;width:1px;height:27px;background:#e2e2e2"></div>
<div class="b" style="left:19px;top:321px;width:1403px;height:1px;background:#f4f4f4"></div>
<div class="b" style="left:34.5px;top:323px;width:1387.5px;height:19px;background:#b0c4de"></div>
<div class="b" style="left:183.5px;top:323px;width:1px;height:19px;background:#c6d4e8"></div>
<div class="b" style="left:558.5px;top:323px;width:1px;height:19px;background:#c6d4e8"></div>
<div class="b" style="left:623.5px;top:323px;width:1px;height:19px;background:#c6d4e8"></div>
<div class="b" style="left:706.5px;top:323px;width:1px;height:19px;background:#c6d4e8"></div>
<div class="b" style="left:806px;top:323px;width:1px;height:19px;background:#c6d4e8"></div>
<div class="b" style="left:895.5px;top:323px;width:1px;height:19px;background:#c6d4e8"></div>
<div class="b" style="left:995.5px;top:323px;width:1px;height:19px;background:#c6d4e8"></div>
<div class="b" style="left:1095.5px;top:323px;width:1px;height:19px;background:#c6d4e8"></div>
<div class="b" style="left:1195.5px;top:323px;width:1px;height:19px;background:#c6d4e8"></div>
<div class="b" style="left:1295.5px;top:323px;width:1px;height:19px;background:#c6d4e8"></div>
<div class="b" style="left:1395.5px;top:323px;width:1px;height:19px;background:#c6d4e8"></div>
<div class="b" style="left:106px;top:323px;width:1px;height:19px;background:#c6d4e8"></div>
<div class="b" style="left:65.3px;top:293px;width:1.6px;height:49px;background:#505050"></div>
<div class="b" style="left:67px;top:323px;width:39px;height:19px;background:#0078d7"></div>
<div class="b" style="left:80.5px;top:326.5px;width:12.5px;height:12.5px;background:#fff;border:1px solid #222"></div>
<div class="b" style="left:896.5px;top:323px;width:98px;height:19px;background:#ff0000"></div>
<div class="b" style="left:996.5px;top:323px;width:98px;height:19px;background:#ff0000"></div>
<svg style="left:23.5px;top:328px" width="6" height="10"><path d="M0.3 0.3L5.4 5L0.3 9.7Z" fill="#000"/></svg>
<span class="t" style="left:70.50px;top:299.86px;letter-spacing:-0.011px">Флаг</span>
<span class="t" style="left:110.50px;top:299.86px;letter-spacing:0.164px">Код товара</span>
<span class="t" style="left:187.50px;top:299.86px;letter-spacing:0.014px">Товар</span>
<span class="t" style="left:562.50px;top:299.86px;letter-spacing:-0.236px">Цена</span>
<span class="t" style="left:627.50px;top:299.86px;letter-spacing:0.093px">Количество</span>
<span class="t" style="left:711.00px;top:299.86px;letter-spacing:-0.113px">Сумма</span>
<span class="t" style="left:810.00px;top:299.86px;letter-spacing:0.045px">Резерв</span>
<span class="t" style="left:899.00px;top:299.86px;letter-spacing:-0.309px">Объём</span>
<span class="t" style="left:999.00px;top:299.86px;letter-spacing:-0.152px">Вес</span>
<span class="t" style="left:1099.50px;top:299.86px;letter-spacing:-0.056px">Свободный</span>
<span class="t" style="left:1199.00px;top:299.86px;letter-spacing:0.401px">Остаток</span>
<span class="t" style="left:1299.00px;top:299.86px;letter-spacing:0.401px">Остаток</span>
<span class="t" style="left:1398.5px;top:300.3px;width:23.5px;overflow:hidden">Ставка</span>
<svg style="left:546px;top:304px" width="5" height="8"><path d="M0.8 7L4 1" stroke="#555" stroke-width="0.9"/></svg>
<span class="t" style="left:55.38px;top:324.06px">1</span>
<span class="t" style="left:149.91px;top:324.06px">16653</span>
<span class="t" style="left:186.50px;top:324.06px;letter-spacing:-0.231px;white-space:pre">Простынь для кровати MET REVEL XL/ REMEKS XL (1 шт)  арт. 15841, 73...</span>
<span class="t" style="left:577.18px;top:324.06px">1 550,00</span>
<span class="t" style="left:697.38px;top:324.06px">2</span>
<span class="t" style="left:760.68px;top:324.06px">3 100,00</span>
<div class="b" style="left:845px;top:326.5px;width:12.5px;height:12.5px;background:#fff;border:1px solid #333"></div>
<svg style="left:847px;top:328.5px" width="9" height="9"><path d="M1 4.4L3.4 6.8L8 1.4" fill="none" stroke="#222" stroke-width="1.4"/></svg>
<span class="t" style="left:971.09px;top:324.06px;color:#100000;-webkit-text-stroke:0.35px">0,00</span>
<span class="t" style="left:1071.09px;top:324.06px;color:#100000;-webkit-text-stroke:0.35px">0,00</span>
<span class="t" style="left:1179.27px;top:324.06px">40</span>
<span class="t" style="left:1279.77px;top:324.06px">20</span>
<span class="t" style="left:1379.77px;top:324.06px">20</span>
<div class="b" style="left:625px;top:580px;width:82px;height:18px;background:#f0f0f0;border:1px solid;border-color:#aaa #e0e0e0 #e0e0e0 #aaa"></div>
<span class="t" style="left:697.38px;top:581.06px">2</span>
<div class="b" style="left:708.5px;top:580px;width:97.5px;height:18px;background:#f0f0f0;border:1px solid;border-color:#aaa #e0e0e0 #e0e0e0 #aaa"></div>
<span class="t" style="left:760.68px;top:581.06px">3 100,00</span>
<div class="b" style="left:897.3px;top:579.3px;width:96.7px;height:18.7px;background:#ff0000;border:1px solid;border-color:#9aa #e8e8e8 #e8e8e8 #9aa"></div>
<span class="t" style="left:971.89px;top:581.06px;color:#100000;-webkit-text-stroke:0.35px">0,00</span>
<div class="b" style="left:997.4px;top:579.3px;width:96.6px;height:18.7px;background:#ff0000;border:1px solid;border-color:#9aa #e8e8e8 #e8e8e8 #9aa"></div>
<span class="t" style="left:1071.89px;top:581.06px;color:#100000;-webkit-text-stroke:0.35px">0,00</span>
<div class="b" style="left:19px;top:604px;width:1403px;height:15px;background:#f0f0f0"></div>
<div class="b" style="left:19px;top:604px;width:1228.5px;height:15px;background:#cdcdcd"></div>
<svg style="left:1409px;top:606px" width="8" height="10"><path d="M1.5 1L6 5L1.5 9" fill="none" stroke="#222" stroke-width="1.7"/></svg>
<div class="b cb" style="left:291.5px;top:638px;width:11.5px;height:11.5px;"></div>
<span class="t" style="left:307.50px;top:636.10px;font-size:10px;letter-spacing:-0.538px">Доп</span>
<div class="b cb" style="left:334px;top:638px;width:11.5px;height:11.5px;"></div>
<svg style="left:335.5px;top:639.3px" width="9" height="9"><path d="M1.2 4.2L3.4 6.6L7.8 1.6" fill="none" stroke="#000" stroke-width="2"/></svg>
<span class="t" style="left:350.60px;top:636.10px;font-size:10px;letter-spacing:-0.522px">ГТД</span>
<div class="b cb" style="left:380px;top:638px;width:11.5px;height:11.5px;"></div>
<span class="t" style="left:396.00px;top:636.10px;font-size:10px;letter-spacing:-0.362px">Заказы на товар</span>
<div class="b cb" style="left:479px;top:638px;width:11.5px;height:11.5px;"></div>
<span class="t" style="left:495.60px;top:636.10px;font-size:10px;letter-spacing:-0.267px">Паковка</span>
<div class="b cb" style="left:544px;top:638px;width:11.5px;height:11.5px;"></div>
<span class="t" style="left:560.60px;top:636.10px;font-size:10px;letter-spacing:-0.309px">Под заказ</span>
<div class="b cb cbd" style="left:616.5px;top:638px;width:11.5px;height:11.5px;"></div>
<svg style="left:618px;top:639.3px" width="9" height="9"><path d="M1.2 4.2L3.4 6.6L7.8 1.6" fill="none" stroke="#8a8a8a" stroke-width="2"/></svg>
<span class="t" style="left:633.40px;top:636.10px;font-size:10px;letter-spacing:-0.290px">Не учит. связ. товары</span>
<div class="b btnd" style="left:1307px;top:635.5px;width:120px;height:20.5px;"></div>
<span class="t" style="left:1342.00px;top:638.02px;font-size:12px;letter-spacing:-0.422px;color:#fff">Стикеры...</span>
<span class="t" style="left:1341.00px;top:637.02px;font-size:12px;letter-spacing:-0.422px;color:#a0a0a0">Стикеры...</span>
<div class="b btn" style="left:1307px;top:663px;width:57px;height:19.5px;"></div>
<span class="t" style="left:1315.00px;top:664.52px;font-size:12px;letter-spacing:-0.401px">Бирки...</span>
<div class="b btnw" style="left:1341.5px;top:685.5px;width:23px;height:20.5px;"></div>
<span class="t" style="left:1350.00px;top:687.56px">?</span>
<div class="b btn" style="left:1372px;top:687.5px;width:57px;height:20px;"></div>
<span class="t" style="left:1379.00px;top:689.02px;font-size:12px;letter-spacing:-0.648px">История</span>
<div class="b btn" style="left:230px;top:655.5px;width:91.5px;height:23.5px;"></div>
<span class="t" style="left:257.50px;top:658.52px;font-size:12px;letter-spacing:-0.262px">Документы</span>
<div class="b btn" style="left:331.5px;top:655.5px;width:57.5px;height:23.5px;"></div>
<span class="t" style="left:356.50px;top:658.52px;font-size:12px;letter-spacing:-0.569px">Excel</span>
<svg style="left:333.5px;top:659.5px" width="17" height="16" viewBox="0 0 17 16"><path d="M5 1.5H12.5L15.5 4.5V14.5H5Z" fill="#fff" stroke="#222" stroke-width="1"/><path d="M12.5 1.5V4.5H15.5" fill="none" stroke="#222" stroke-width="0.8"/><path d="M0.8 1.8L4 1.6L10.6 10.6L7.4 10.8Z" fill="#2a9a3a"/><path d="M10 1.6L6.8 1.8L0.6 10.8L3.8 10.6Z" fill="#1f8a32"/><path d="M7.5 11.5H11" stroke="#2a9a3a" stroke-width="1"/></svg>
<div class="b btnd" style="left:395px;top:655.5px;width:44px;height:23.5px;"></div>
<span class="t" style="left:404.75px;top:659.52px;font-size:12px;letter-spacing:-0.738px;color:#fff">Цены</span>
<span class="t" style="left:403.75px;top:658.52px;font-size:12px;letter-spacing:-0.738px;color:#a0a0a0">Цены</span>
<div class="b btn" style="left:445.5px;top:655.5px;width:52px;height:23.5px;"></div>
<span class="t" style="left:470.00px;top:658.52px;font-size:12px;letter-spacing:-0.582px">Тест</span>
<svg style="left:448px;top:659px" width="17" height="16" viewBox="0 0 17 16"><path d="M2 1.5C1.4 5 2.6 7.6 4.6 7.6C6.6 7.6 7.8 5 7.2 1.5" fill="none" stroke="#1c2ca0" stroke-width="1.3"/><path d="M4.6 7.6C4.6 12.5 7 14 9.2 12.6L12.5 10.2" fill="none" stroke="#1c2ca0" stroke-width="1.3"/><path d="M11.5 8L15.4 9L12.6 12.2Z" fill="#1c2ca0"/></svg>
<span class="t" style="left:512.00px;top:660.48px;font-size:13px;line-height:18px;letter-spacing:-0.941px;-webkit-text-stroke:0.08px">Для склада</span>
<div class="b sk" style="left:583px;top:656.3px;width:714px;height:21.7px;border-right-color:#e3e3e3;border-bottom-color:#e3e3e3"></div>
<span class="t" style="left:587.50px;top:659.52px;font-size:12px;letter-spacing:-0.461px">отгружать вместе с №1308306</span>
<div class="b sk" style="left:20px;top:685.7px;width:1277px;height:21.6px;border-right-color:#e3e3e3;border-bottom-color:#e3e3e3"></div>
<span class="t" style="left:24px;top:689px;width:505px;text-align:right;font-size:12px;letter-spacing:-0.365px;direction:ltr">Перемещение ЧЗ №1308305 от 17.11.2021, проведен 17.11.2021 16:34:11</span>
<div class="b" style="left:2px;top:711px;width:1436px;height:1px;background:#d4d4d4"></div>
<div class="b" style="left:2px;top:712px;width:1436px;height:1px;background:#fff"></div>
<div class="b btn" style="left:230px;top:720px;width:101px;height:23.5px;"></div>
<span class="t" style="left:272.00px;top:723.52px;font-size:12px;letter-spacing:-0.371px">Товар</span>
<div class="b btnw" style="left:338.5px;top:718.5px;width:27px;height:26px;"></div>
<svg style="left:342px;top:721.5px" width="11" height="22" viewBox="0 0 11 22"><path d="M1.2 19.5V7C1.2 -0.8 9.8 -0.8 9.8 7V19.5C9.8 20.6 8.8 20.8 8.2 20.8H2.8C2.2 20.8 1.2 20.6 1.2 19.5Z" fill="#fff" stroke="#222" stroke-width="1.1"/><path d="M3.6 18.6V7.4C3.6 4 7.4 4 7.4 7.4V18.6Z" fill="#fff" stroke="#444" stroke-width="1"/></svg>
<div class="b btnw" style="left:374px;top:718.5px;width:27px;height:26px;"></div>
<span class="t" style="left:384.00px;top:723.52px;font-size:12px">?</span>
<span class="t" style="left:404.50px;top:715.02px;font-size:12px;letter-spacing:-0.542px;color:#1a66c0">Создан: 17.11.2021 16:41:41</span>
<span class="t" style="left:404.50px;top:730.02px;font-size:12px;letter-spacing:-0.610px;color:#1a66c0">Автор:</span>
<svg style="left:448px;top:732.5px;filter:blur(0.5px)" width="48" height="12"><rect x="0" y="0" width="4" height="4" fill="#c8dcf4" fill-opacity="0.52"/><rect x="0" y="4" width="4" height="4" fill="#a8c8f0" fill-opacity="0.71"/><rect x="0" y="8" width="4" height="4" fill="#b8d4f4" fill-opacity="0.62"/><rect x="4" y="0" width="4" height="4" fill="#8ab4e8" fill-opacity="0.54"/><rect x="4" y="4" width="4" height="4" fill="#8ab4e8" fill-opacity="0.83"/><rect x="4" y="8" width="4" height="4" fill="#c8dcf4" fill-opacity="0.58"/><rect x="8" y="0" width="4" height="4" fill="#8ab4e8" fill-opacity="0.63"/><rect x="8" y="4" width="4" height="4" fill="#8ab4e8" fill-opacity="0.71"/><rect x="8" y="8" width="4" height="4" fill="#8ab4e8" fill-opacity="0.62"/><rect x="12" y="0" width="4" height="4" fill="#a8c8f0" fill-opacity="0.54"/><rect x="12" y="4" width="4" height="4" fill="#c8dcf4" fill-opacity="0.65"/><rect x="12" y="8" width="4" height="4" fill="#6a9ce0" fill-opacity="0.51"/><rect x="16" y="4" width="4" height="4" fill="#6a9ce0" fill-opacity="0.74"/><rect x="16" y="8" width="4" height="4" fill="#6a9ce0" fill-opacity="0.39"/><rect x="20" y="0" width="4" height="4" fill="#8ab4e8" fill-opacity="0.64"/><rect x="20" y="4" width="4" height="4" fill="#8ab4e8" fill-opacity="0.90"/><rect x="20" y="8" width="4" height="4" fill="#a8c8f0" fill-opacity="0.66"/><rect x="28" y="0" width="4" height="4" fill="#6a9ce0" fill-opacity="0.48"/><rect x="28" y="4" width="4" height="4" fill="#8ab4e8" fill-opacity="0.94"/><rect x="32" y="0" width="4" height="4" fill="#8ab4e8" fill-opacity="0.39"/><rect x="32" y="4" width="4" height="4" fill="#c8dcf4" fill-opacity="0.70"/><rect x="32" y="8" width="4" height="4" fill="#c8dcf4" fill-opacity="0.54"/><rect x="36" y="4" width="4" height="4" fill="#c8dcf4" fill-opacity="0.68"/><rect x="36" y="8" width="4" height="4" fill="#a8c8f0" fill-opacity="0.38"/><rect x="40" y="4" width="4" height="4" fill="#8ab4e8" fill-opacity="0.71"/><rect x="40" y="8" width="4" height="4" fill="#b8d4f4" fill-opacity="0.58"/><rect x="44" y="4" width="4" height="4" fill="#6a9ce0" fill-opacity="0.65"/><rect x="44" y="8" width="4" height="4" fill="#6a9ce0" fill-opacity="0.50"/></svg>
<div class="b btnd" style="left:563px;top:719.5px;width:25px;height:20.5px;"></div>
<svg style="left:567px;top:722px" width="17" height="16" viewBox="0 0 17 16"><circle cx="8.5" cy="5" r="3.4" fill="#e4e4e4" stroke="#9a9a9a" stroke-width="0.9"/><path d="M2 15.5C2 11 5 9.4 8.5 9.4C12 9.4 15 11 15 15.5" fill="#e4e4e4" stroke="#9a9a9a" stroke-width="0.9"/><path d="M7.4 10L8.5 14L9.6 10" fill="#b0b0b0"/></svg>
<span class="t" style="left:597.50px;top:722.52px;font-size:12px;letter-spacing:-0.632px;color:#1a66c0">Исполнитель:</span>
<div class="b btn" style="left:937px;top:719px;width:202.5px;height:24.3px;"></div>
<span class="t" style="left:947.00px;top:723.52px;font-size:12px;letter-spacing:-0.512px">Отправить сообщение КА о покупке</span>
<div class="b btn" style="left:1148.5px;top:720.5px;width:86px;height:23.5px;"></div>
<span class="t" style="left:1183.50px;top:723.68px;font-size:13px;line-height:18px;letter-spacing:-1.142px;-webkit-text-stroke:0.08px">OK</span>
<div class="b btn" style="left:1245px;top:720.5px;width:86px;height:23.5px;"></div>
<span class="t" style="left:1260.00px;top:723.68px;font-size:13px;line-height:18px;letter-spacing:-1.123px;-webkit-text-stroke:0.08px">Сохранить</span>
<div class="b btn" style="left:1340.5px;top:720.5px;width:86.5px;height:23.5px;"></div>
<span class="t" style="left:1363.50px;top:723.68px;font-size:13px;line-height:18px;letter-spacing:-1.024px;-webkit-text-stroke:0.08px">Отмена</span>
<div class="b" style="left:0px;top:752px;width:1440px;height:1px;background:#e4e4e4"></div>
<div class="b" style="left:0px;top:753px;width:1440px;height:84px;background:#f2f2f2"></div>
<div class="b" style="left:8px;top:780px;width:1432px;height:1px;background:#c8c8c8"></div>
<div class="b" style="left:8px;top:781px;width:1432px;height:1px;background:#fbfbfb"></div>
<div class="b" style="left:8px;top:809px;width:1432px;height:1px;background:#c8c8c8"></div>
<div class="b" style="left:8px;top:810px;width:1432px;height:1px;background:#fbfbfb"></div>
<div class="b grip" style="left:3px;top:756px;width:2px;height:76px;"></div>
<div class="b" style="left:0px;top:837px;width:1440px;height:2px;background:#000"></div>
<span class="t" style="left:11.50px;top:756.92px;font-size:12px;letter-spacing:0.021px">Справочник: Пользователи</span>
<svg style="left:175px;top:761.9px" width="8" height="8"><path d="M1.2 1.2L6.8 6.8M6.8 1.2L1.2 6.8" stroke="#6a6a6a" stroke-width="2.1"/></svg>
<div class="b" style="left:193px;top:755.4px;width:1px;height:21px;background:#c4c4c4"></div>
<span class="t" style="left:199.00px;top:756.92px;font-size:12px;letter-spacing:-0.081px">Журнал резервов</span>
<svg style="left:308px;top:761.9px" width="8" height="8"><path d="M1.2 1.2L6.8 6.8M6.8 1.2L1.2 6.8" stroke="#6a6a6a" stroke-width="2.1"/></svg>
<div class="b" style="left:326px;top:755.4px;width:1px;height:21px;background:#c4c4c4"></div>
<span class="t" style="left:332.00px;top:756.92px;font-size:12px;letter-spacing:-0.050px">Журнал документов Перемещение ...</span>
<svg style="left:550px;top:761.9px" width="8" height="8"><path d="M1.2 1.2L6.8 6.8M6.8 1.2L1.2 6.8" stroke="#6a6a6a" stroke-width="2.1"/></svg>
<div class="b" style="left:568px;top:755.4px;width:1px;height:21px;background:#c4c4c4"></div>
<span class="t" style="left:575.00px;top:756.92px;font-size:12px;letter-spacing:-0.111px">Перемещение ЧЗ (Собрано) №1308...</span>
<svg style="left:794px;top:761.9px" width="8" height="8"><path d="M1.2 1.2L6.8 6.8M6.8 1.2L1.2 6.8" stroke="#6a6a6a" stroke-width="2.1"/></svg>
<div class="b" style="left:812px;top:755.4px;width:1px;height:21px;background:#c4c4c4"></div>
<span class="t" style="left:818.00px;top:756.92px;font-size:12px;letter-spacing:-0.335px">Резерв (5.1 Расход товара) №13...</span>
<svg style="left:1010px;top:761.9px" width="8" height="8"><path d="M1.2 1.2L6.8 6.8M6.8 1.2L1.2 6.8" stroke="#6a6a6a" stroke-width="2.1"/></svg>
<div class="b" style="left:1028px;top:755.4px;width:1px;height:21px;background:#c4c4c4"></div>
<span class="t" style="left:1034.00px;top:756.92px;font-size:12px;letter-spacing:-0.157px">Параметры отчета Резерв товара</span>
<svg style="left:1228px;top:761.9px" width="8" height="8"><path d="M1.2 1.2L6.8 6.8M6.8 1.2L1.2 6.8" stroke="#6a6a6a" stroke-width="2.1"/></svg>
<span class="t" style="left:11.50px;top:786.32px;font-size:12px;letter-spacing:-0.072px">Параметры отчета Остатки на ск...</span>
<svg style="left:213px;top:791.3px" width="8" height="8"><path d="M1.2 1.2L6.8 6.8M6.8 1.2L1.2 6.8" stroke="#6a6a6a" stroke-width="2.1"/></svg>
<div class="b" style="left:231px;top:784.8px;width:1px;height:21px;background:#c4c4c4"></div>
<span class="t" style="left:237.00px;top:786.32px;font-size:12px;letter-spacing:-0.335px">Резерв (5.1 Расход товара) №13...</span>
<svg style="left:429px;top:791.3px" width="8" height="8"><path d="M1.2 1.2L6.8 6.8M6.8 1.2L1.2 6.8" stroke="#6a6a6a" stroke-width="2.1"/></svg>
<div class="b" style="left:447px;top:784.8px;width:1px;height:21px;background:#c4c4c4"></div>
<span class="t" style="left:453.00px;top:786.32px;font-size:12px;letter-spacing:-0.281px">Резерв товара с 1 октября 2019...</span>
<svg style="left:643px;top:791.3px" width="8" height="8"><path d="M1.2 1.2L6.8 6.8M6.8 1.2L1.2 6.8" stroke="#6a6a6a" stroke-width="2.1"/></svg>
<div class="b" style="left:661px;top:784.8px;width:1px;height:21px;background:#c4c4c4"></div>
<span class="t" style="left:667.00px;top:786.32px;font-size:12px;letter-spacing:-0.312px">Резерв (0. Заказ безнал) №1306...</span>
<svg style="left:859px;top:791.3px" width="8" height="8"><path d="M1.2 1.2L6.8 6.8M6.8 1.2L1.2 6.8" stroke="#6a6a6a" stroke-width="2.1"/></svg>
<div class="b" style="left:877px;top:784.8px;width:1px;height:21px;background:#c4c4c4"></div>
<span class="t" style="left:883.00px;top:786.32px;font-size:12px;letter-spacing:-0.209px">Остатки на складах с 1 октября...</span>
<svg style="left:1073px;top:791.3px" width="8" height="8"><path d="M1.2 1.2L6.8 6.8M6.8 1.2L1.2 6.8" stroke="#6a6a6a" stroke-width="2.1"/></svg>
<div class="b" style="left:1091px;top:784.8px;width:1px;height:21px;background:#c4c4c4"></div>
<span class="t" style="left:1098.00px;top:786.32px;font-size:12px;letter-spacing:-0.281px">Резерв товара с 1 октября 2019...</span>
<svg style="left:1288px;top:791.3px" width="8" height="8"><path d="M1.2 1.2L6.8 6.8M6.8 1.2L1.2 6.8" stroke="#6a6a6a" stroke-width="2.1"/></svg>
<span class="t" style="left:11.50px;top:814.92px;font-size:12px;letter-spacing:-0.064px">Параметры отчета Честный Знак</span>
<svg style="left:206px;top:819.9px" width="8" height="8"><path d="M1.2 1.2L6.8 6.8M6.8 1.2L1.2 6.8" stroke="#6a6a6a" stroke-width="2.1"/></svg>
<div class="b" style="left:224px;top:813.4px;width:1px;height:21px;background:#c4c4c4"></div>
<span class="t" style="left:230.00px;top:814.92px;font-size:12px;letter-spacing:-0.102px">Резерв (4.1 Разрешено к отпуск...</span>
<svg style="left:424px;top:819.9px" width="8" height="8"><path d="M1.2 1.2L6.8 6.8M6.8 1.2L1.2 6.8" stroke="#6a6a6a" stroke-width="2.1"/></svg>
<div class="b" style="left:442px;top:813.4px;width:1px;height:21px;background:#c4c4c4"></div>
<span class="t" style="left:449.00px;top:814.92px;font-size:12px;letter-spacing:0.091px">Справочник: Обработчики</span>
<svg style="left:609px;top:819.9px" width="8" height="8"><path d="M1.2 1.2L6.8 6.8M6.8 1.2L1.2 6.8" stroke="#6a6a6a" stroke-width="2.1"/></svg>
<div class="b" style="left:627px;top:813.4px;width:1px;height:21px;background:#c4c4c4"></div>
<span class="t" style="left:633.00px;top:814.92px;font-size:12px;letter-spacing:0.042px">Справочник: Пользователи</span>
<svg style="left:797px;top:819.9px" width="8" height="8"><path d="M1.2 1.2L6.8 6.8M6.8 1.2L1.2 6.8" stroke="#6a6a6a" stroke-width="2.1"/></svg>
<div class="b" style="left:815px;top:813.4px;width:1px;height:21px;background:#c4c4c4"></div>
<span class="t" style="left:821.00px;top:814.92px;font-size:12px;letter-spacing:-0.149px">Честный Знак с 1 марта 2021 г....</span>
<svg style="left:1011px;top:819.9px" width="8" height="8"><path d="M1.2 1.2L6.8 6.8M6.8 1.2L1.2 6.8" stroke="#6a6a6a" stroke-width="2.1"/></svg>
<div class="b" style="left:1029px;top:813.4px;width:1px;height:21px;background:#c4c4c4"></div>
<span class="t" style="left:1035.00px;top:814.92px;font-size:12px;letter-spacing:-0.081px">Журнал резервов</span>
<svg style="left:1143px;top:819.9px" width="8" height="8"><path d="M1.2 1.2L6.8 6.8M6.8 1.2L1.2 6.8" stroke="#6a6a6a" stroke-width="2.1"/></svg>
<div class="b" style="left:1164.5px;top:813px;width:190.5px;height:20.5px;background:#cfe0f2;border:1px solid #1e82dc;border-radius:2px"></div>
<span class="t" style="left:1169.00px;top:814.92px;font-size:12px;letter-spacing:-0.235px">Резерв (5.2 Отгруженная достав...</span>
<svg style="left:1363px;top:819.9px" width="8" height="8"><path d="M1.2 1.2L6.8 6.8M6.8 1.2L1.2 6.8" stroke="#6a6a6a" stroke-width="2.1"/></svg>
<svg style="left:1417px;top:816px" width="20" height="18" viewBox="0 0 20 18"><path d="M1 9L9 3L19 8L11 15Z" fill="#333" stroke="#000" stroke-width="0.8"/><path d="M1 9V12L11 17.5V15Z" fill="#111"/><path d="M11 15L19 8V11L11 17.5Z" fill="#555"/><path d="M6 7.5L9.5 5L14 7.5L10.5 10.2Z" fill="#ddd"/></svg>
<span class="t" style="left:1027.50px;top:733.20px;font-size:20px;line-height:26px;letter-spacing:-0.107px;-webkit-text-stroke:0.08px;color:rgba(125,125,125,0.48);-webkit-text-stroke:0">Активация Windows</span>
<span class="t" style="left:1027.50px;top:758.42px;font-size:14.5px;line-height:20px;letter-spacing:0.219px;-webkit-text-stroke:0.08px;color:rgba(125,125,125,0.48);-webkit-text-stroke:0">Чтобы активировать Windows, перейдите в раздел</span>
<span class="t" style="left:1027.50px;top:777.92px;font-size:14.5px;line-height:20px;letter-spacing:0.074px;-webkit-text-stroke:0.08px;color:rgba(125,125,125,0.48);-webkit-text-stroke:0">"Параметры".</span>
<div class="b" style="left:9px;top:638px;width:1.3px;height:12px;background:#808080"></div>
<div class="b" style="left:10.2px;top:401.2px;width:266.3px;height:343.3px;background:#fff;border:1px solid #a0a0a0;border-radius:1.5px;box-shadow:2px 2px 2px rgba(0,0,0,0.4)"></div>
<div class="b" style="left:13px;top:404px;width:23.3px;height:338px;background:#f0f0f0"></div>
<div class="b" style="left:12px;top:695.5px;width:262.5px;height:22.5px;background:#b5d7f3;border:1px solid #3399ff"></div>
<span class="t" style="left:42.50px;top:405.82px;font-size:12px;letter-spacing:-0.300px">Возврат</span>
<span class="t" style="left:42.50px;top:430.92px;font-size:12px;letter-spacing:0.031px">История по подтипам</span>
<span class="t" style="left:42.50px;top:452.52px;font-size:12px;letter-spacing:-0.575px">Создать РБР</span>
<span class="t" style="left:42.50px;top:474.92px;font-size:12px;letter-spacing:-0.031px">История команд над документом</span>
<span class="t" style="left:42.50px;top:497.02px;font-size:12px;letter-spacing:-0.106px">Выгрузить сертификаты</span>
<span class="t" style="left:42.50px;top:521.72px;font-size:12px;letter-spacing:-0.164px">Удалить документ</span>
<span class="t" style="left:42.50px;top:543.82px;font-size:12px;letter-spacing:-0.104px">Обновить</span>
<span class="t" style="left:42.50px;top:565.82px;font-size:12px;letter-spacing:-0.163px">Создание отчета по доставке</span>
<span class="t" style="left:42.50px;top:587.82px;font-size:12px;letter-spacing:-0.129px">Перевести в подтип..</span>
<span class="t" style="left:42.50px;top:609.82px;font-size:12px;letter-spacing:-0.155px">Сменить автора</span>
<span class="t" style="left:42.50px;top:631.82px;font-size:12px;letter-spacing:0.020px">Оформить претензию по гарантии</span>
<span class="t" style="left:42.50px;top:653.82px;font-size:12px;letter-spacing:-0.100px">Смена фирмы связанных документов</span>
<span class="t" style="left:42.50px;top:675.82px;font-size:12px;letter-spacing:0.078px">Изменить комментарий</span>
<span class="t" style="left:42.50px;top:697.82px;font-size:12px;letter-spacing:-0.165px">Отправить в Диадок</span>
<span class="t" style="left:42.50px;top:722.52px;font-size:12px;letter-spacing:-0.162px">Изменить дату и время проведения</span>
<div class="b" style="left:36.5px;top:426px;width:238px;height:1px;background:#a8a8a8"></div>
<div class="b" style="left:36.5px;top:427px;width:238px;height:1px;background:#fff"></div>
<div class="b" style="left:36.5px;top:517px;width:238px;height:1px;background:#a8a8a8"></div>
<div class="b" style="left:36.5px;top:518px;width:238px;height:1px;background:#fff"></div>
<svg style="left:17px;top:523.5px" width="13" height="13"><path d="M1 1.2C4 3.5 8 7.5 11.5 12M11.8 0.8C8 4 4 8 1 12" fill="none" stroke="#e02424" stroke-width="2" stroke-linecap="round"/></svg>
<svg style="left:17px;top:543.5px" width="13" height="17" viewBox="0 0 13 17"><path d="M2.5 4.5H8.5L11.5 7.5V15.5H2.5" fill="#fff" stroke="#8a8a8a" stroke-width="0.8"/><path d="M11.5 7.8V15.5H3" fill="none" stroke="#444" stroke-width="0.9"/><path d="M1 8C1 4.6 3.8 3 6.6 3.2V0.6L11.6 4.4L6.6 8.2V5.8C5 5.6 3.6 6.4 3.4 8.4Z" fill="#30d030" stroke="#18a018" stroke-width="0.5"/><path d="M11.4 9.4C11.4 12.8 8.6 14.4 5.8 14.2V16.6L0.8 12.9L5.8 9.2V11.6C7.4 11.8 8.8 11 9 9Z" fill="#30d030" stroke="#18a018" stroke-width="0.5"/></svg>
<svg style="left:15px;top:722px" width="17" height="17" viewBox="0 0 17 17"><rect x="0.5" y="0.5" width="16" height="16" fill="#a040a8"/><rect x="2.5" y="3.5" width="12" height="9" fill="#f4e8f6"/><path d="M4 8H6L7 6L8.5 10L10 7.5L11 8H13" fill="none" stroke="#2a9a50" stroke-width="0.9"/></svg>
</body></html>
